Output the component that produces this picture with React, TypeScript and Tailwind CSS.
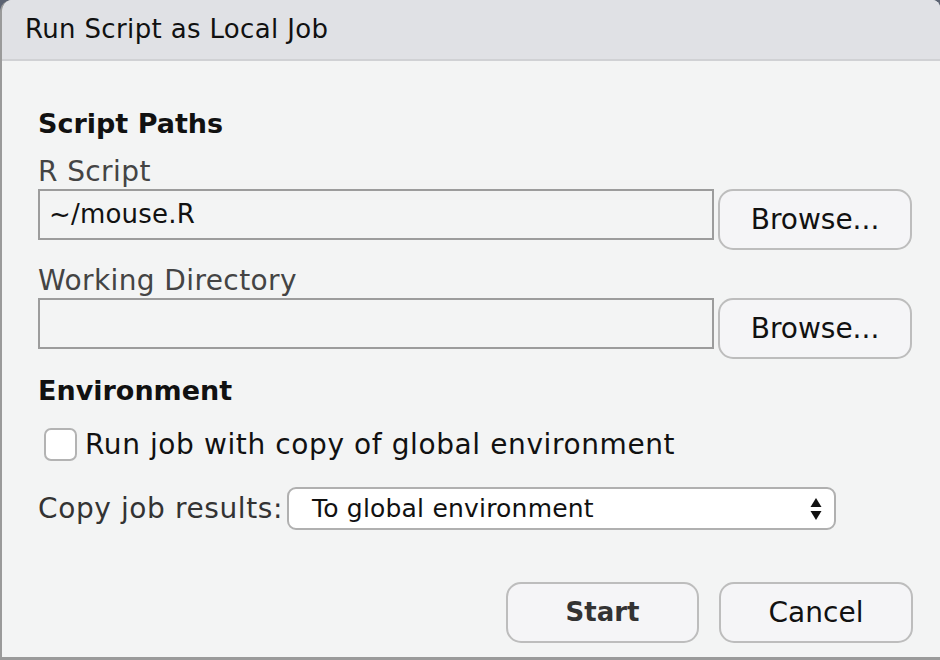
const font = { fontFamily: '"DejaVu Sans", "Liberation Sans", sans-serif' };

function BrowseButton() {
  return (
    <button className="w-[194px] h-[61px] rounded-[15px] border-2 border-[#bdbdbd] bg-[#f5f5f7] text-[28px] text-[#111] shrink-0">
      Browse...
    </button>
  );
}

function PathField({ label, value }: { label: string; value?: string }) {
  return (
    <div className="flex flex-col">
      <div className="text-[28px] leading-[34px] tracking-[0.4px] text-[#444] h-[34px]">{label}</div>
      <div className="flex items-start gap-[4px]">
        <div className="w-[676px] h-[51px] border-2 border-[#9c9c9c] bg-[#f3f4f4] px-[9px] flex items-center text-[26px] tracking-[0.2px] text-[#111]">
          {value}
        </div>
        <BrowseButton />
      </div>
    </div>
  );
}

export default function App() {
  return (
    <div className="w-[940px] h-[660px] bg-[#5c6372]" style={font}>
      <div className="w-full h-full flex flex-col bg-[#f3f4f4] rounded-tl-[12px] rounded-tr-[8px] overflow-hidden border-l-2 border-b-[3px] border-[#9a9a9a]">
        <div className="h-[61px] bg-[#e0e1e5] border-b-2 border-[#d0d1d4] flex items-center pl-[23px] text-[26px] tracking-[0.35px] text-[#111] shrink-0">
          Run Script as Local Job
        </div>
        <div className="flex flex-col pl-[36px] pt-[45px]">
          <div className="text-[27px] font-bold text-[#111] leading-[36px]">Script Paths</div>
          <div className="mt-[13px]">
            <PathField label="R Script" value="~/mouse.R" />
          </div>
          <div className="mt-[14px]">
            <PathField label="Working Directory" />
          </div>
          <div className="text-[27px] font-bold text-[#111] leading-[36px] mt-[14px]">Environment</div>
          <div className="flex items-center mt-[19px] ml-[6px] gap-[8px]">
            <div className="w-[33px] h-[33px] rounded-[7px] border-2 border-[#b3b3b3] bg-white" />
            <span className="text-[28px] leading-[33px] tracking-[0.6px] text-[#111]">Run job with copy of global environment</span>
          </div>
          <div className="flex items-center mt-[26px] gap-[4px]">
            <span className="text-[28px] tracking-[0.6px] text-[#333]">Copy job results:</span>
            <div className="w-[549px] h-[43px] rounded-[9px] border-2 border-[#b0b0b0] bg-white flex items-center justify-between pl-[23px] pr-[12px]">
              <span className="text-[25px] tracking-[0.2px] text-[#111]">To global environment</span>
              <svg width="12" height="24" viewBox="0 0 12 24">
                <path d="M6 1 L11.5 10 L0.5 10 Z" fill="#111" />
                <path d="M0.5 14 L11.5 14 L6 23 Z" fill="#111" />
              </svg>
            </div>
          </div>
          <div className="flex justify-end gap-[20px] mt-[52px] pr-[27px]">
            <button className="w-[193px] h-[61px] rounded-[15px] border-2 border-[#bdbdbd] bg-[#f5f5f7] text-[26px] font-bold text-[#333]">
              Start
            </button>
            <button className="w-[194px] h-[61px] rounded-[15px] border-2 border-[#bdbdbd] bg-[#f5f5f7] text-[28px] text-[#111]">
              Cancel
            </button>
          </div>
        </div>
      </div>
    </div>
  );
}
